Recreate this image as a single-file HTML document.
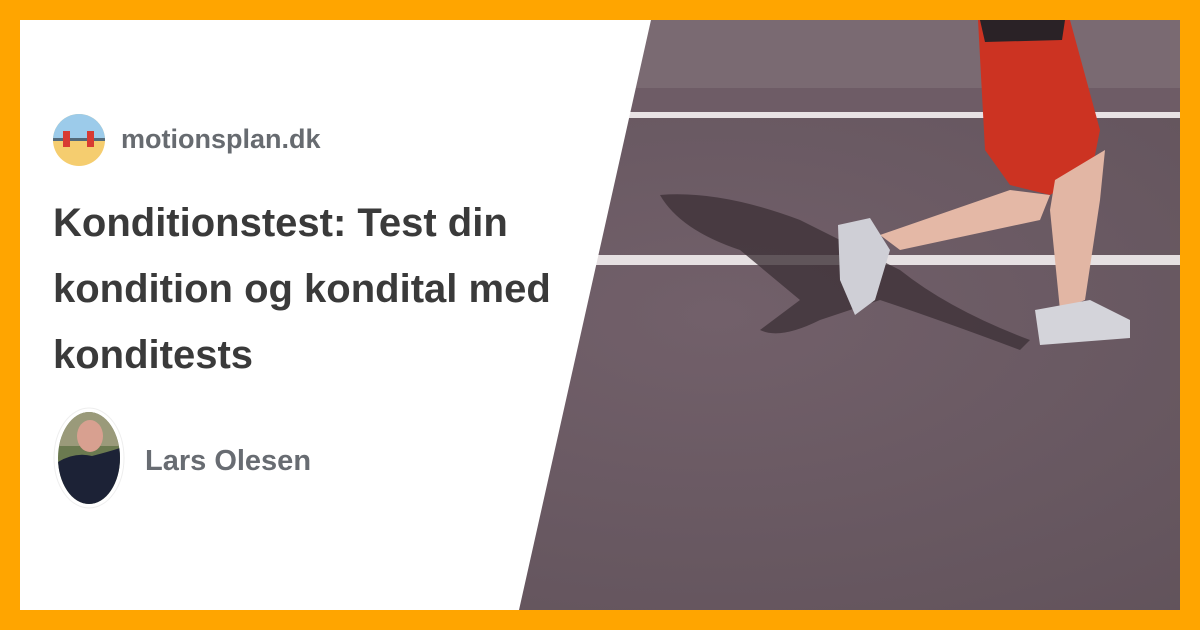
<!DOCTYPE html>
<html><head><meta charset="utf-8"><style>
body{margin:0;width:1200px;height:630px;overflow:hidden;background:#FFA500;font-family:"Liberation Sans",Arial,sans-serif}
.wrap{position:absolute;left:20px;top:20px;width:1160px;height:590px;overflow:hidden;background:#6a5a62}
.t{position:absolute;color:#3a3a3a;font-weight:bold}
</style></head><body>
<div class="wrap">
<svg width="1160" height="590" style="position:absolute;left:0;top:0">
<defs><radialGradient id="g" cx="0.6" cy="0.5" r="0.8"><stop offset="0" stop-color="#72606a"/><stop offset="1" stop-color="#5e5058"/></radialGradient></defs>
<rect width="1160" height="590" fill="url(#g)"/>
<rect x="600" y="0" width="560" height="68" fill="#7a6a72"/>
<rect x="600" y="68" width="560" height="26" fill="#6e5c66"/>
<rect x="600" y="92" width="560" height="6" fill="#e8e2e4"/>
<rect x="560" y="235" width="600" height="10" fill="#e6e0e2"/>
<path d="M640 175 Q700 170 780 200 L880 250 Q930 290 1010 320 L1000 330 Q920 300 860 280 L800 300 Q760 320 740 310 L780 280 L720 230 Q660 210 640 175Z" fill="#3f3238" opacity="0.8"/>
<path d="M958 0 L1050 0 L1080 110 L1072 150 L1030 175 L990 165 L965 130Z" fill="#cc3322"/>
<path d="M960 0 L1045 0 L1042 20 L965 22Z" fill="#2a2226"/>
<path d="M1035 160 L1085 130 L1080 180 L1065 280 L1040 290 L1030 190Z" fill="#e2b6a4"/>
<path d="M990 170 L1030 175 L1020 200 L880 230 L860 215Z" fill="#e4b8a6"/>
<path d="M818 205 L850 198 L870 230 L855 280 L835 295 L820 260Z" fill="#cfcfd6"/>
<path d="M1015 290 L1070 280 L1110 300 L1110 318 L1020 325Z" fill="#d4d4da"/>
</svg>
<svg width="1160" height="590" style="position:absolute;left:0;top:0"><polygon points="0,0 631,0 499,590 0,590" fill="#fff"/></svg>
<svg width="54" height="54" style="position:absolute;left:32px;top:93px"><clipPath id="c"><circle cx="27" cy="27" r="26"/></clipPath><g clip-path="url(#c)"><rect width="54" height="54" fill="#f5cd6f"/><rect width="54" height="27" fill="#9ccbea"/><rect x="0" y="25" width="54" height="3" fill="#546a7a"/><rect x="11" y="18" width="7" height="16" fill="#d83a32"/><rect x="35" y="18" width="7" height="16" fill="#d83a32"/></g></svg>
<div class="t" style="left:101px;top:104px;font-size:27px;color:#676b70">motionsplan.dk</div>
<div class="t" style="left:33px;top:170px;font-size:40px;line-height:66px;width:560px">Konditionstest: Test din kondition og kondital med konditests</div>
<svg width="74" height="104" style="position:absolute;left:32px;top:386px"><ellipse cx="37" cy="52" rx="35" ry="50" fill="#fff" stroke="#eee"/><clipPath id="d"><ellipse cx="37" cy="52" rx="31" ry="46"/></clipPath><g clip-path="url(#d)"><rect width="74" height="104" fill="#6b7a50"/><rect y="0" width="74" height="40" fill="#9a9a7a"/><ellipse cx="38" cy="30" rx="13" ry="16" fill="#d8a090"/><path d="M0 60 Q20 45 40 50 Q60 45 74 40 L74 104 L0 104Z" fill="#1c2236"/></g></svg>
<div class="t" style="left:125px;top:425px;font-size:29px;color:#686c72">Lars Olesen</div>
</div>
</body></html>
